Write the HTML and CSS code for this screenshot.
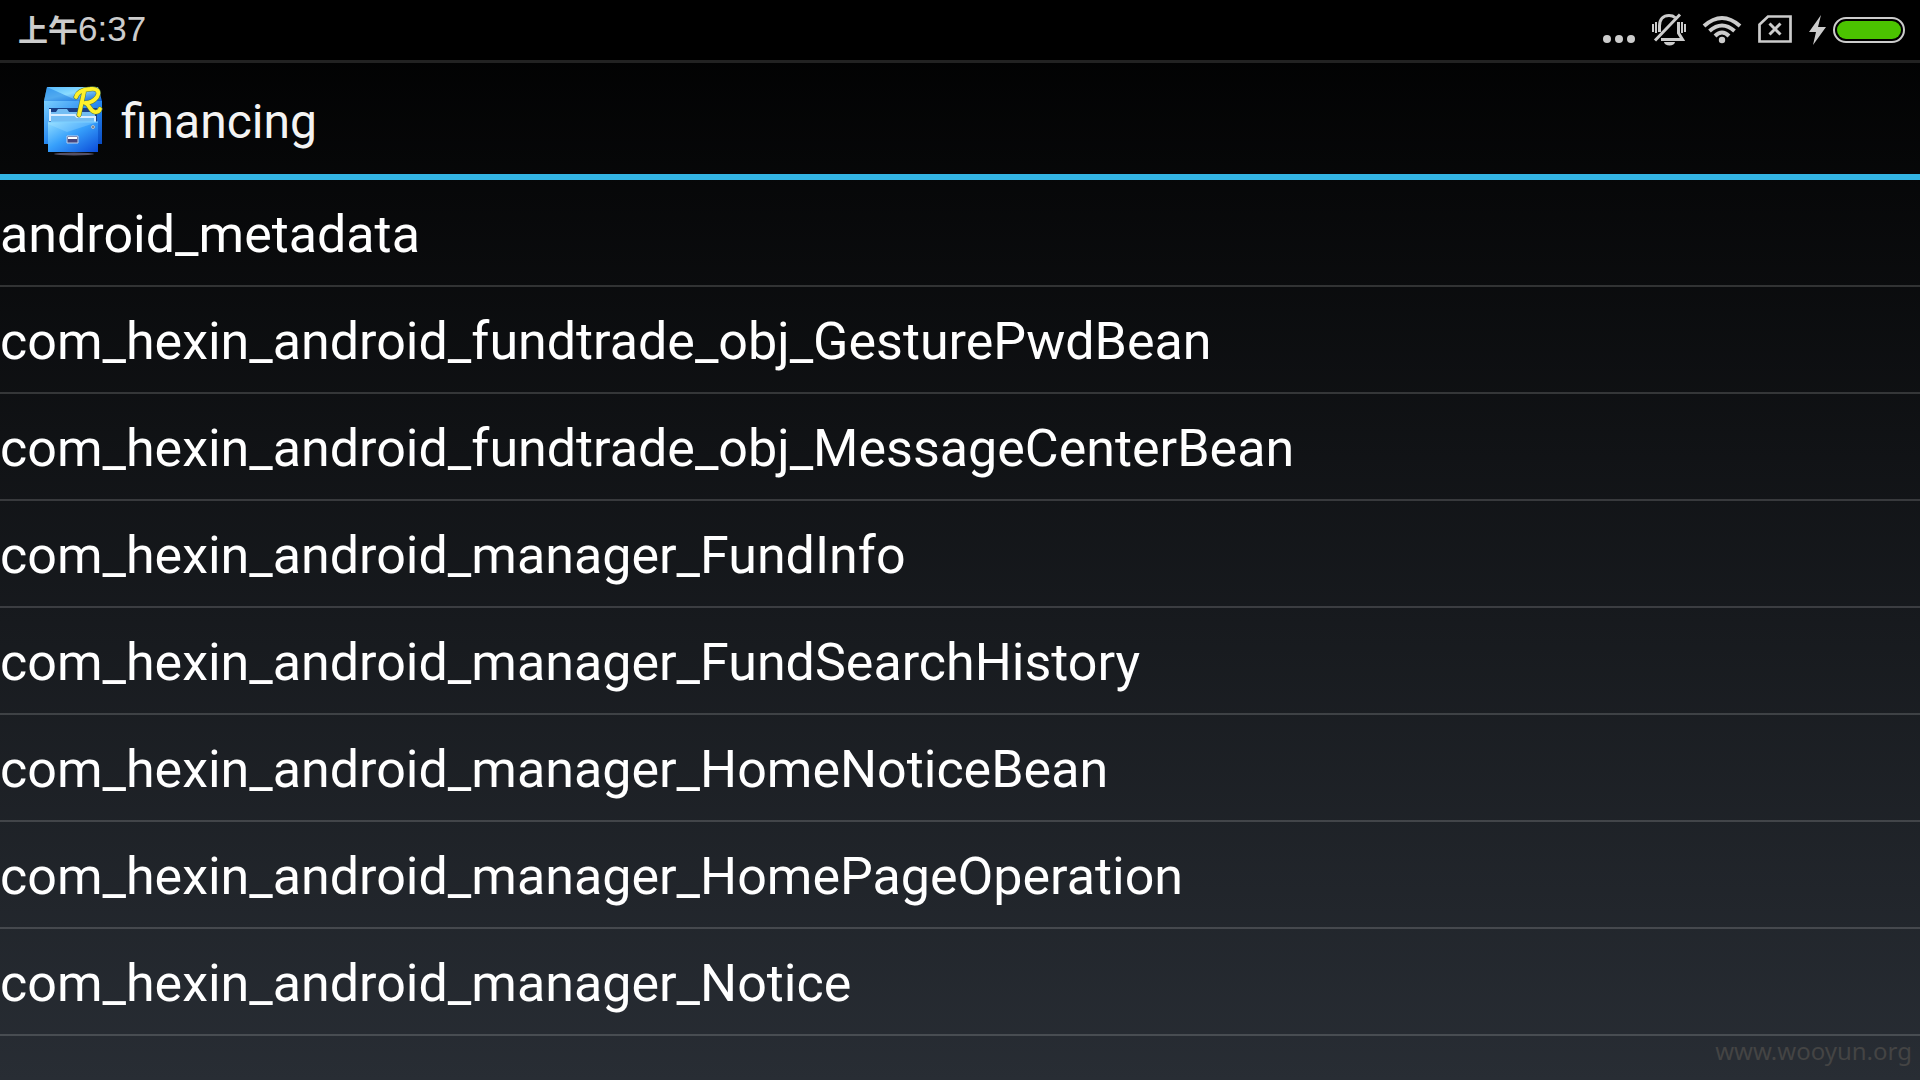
FILE: index.html
```html
<!DOCTYPE html>
<html lang="zh-CN">
<head>
<meta charset="utf-8">
<meta name="viewport" content="width=device-width, initial-scale=1">
<title>financing</title>
<link rel="stylesheet" href="styles.css">
</head>
<body>
<div class="status-bar">
  <time class="clock"><span class="period">上午</span>6:37</time>
  <svg class="status-icons" viewBox="0 0 320 60" role="img" aria-label="Muted, Wi-Fi, no SIM, charging">
    <g fill="#ccc">
      <circle cx="17" cy="39" r="4"/><circle cx="29" cy="39" r="4"/><circle cx="41" cy="39" r="4"/>
      <circle cx="132" cy="40" r="3.200"/>
      <path d="M74 42h11a5.500 3.500 0 0 1-11 0z"/>
      <path d="M231 15 219 32h7l-3 13 13-18h-8z"/>
    </g>
    <g fill="none" stroke="#ccc" stroke-width="3">
      <path d="M69.500 32V26c0-7 4-10.500 9.500-10.500q4 0 6 2M88.500 22v11l4 6.500H71M65 40.500 90 14.500"/>
      <path stroke-width="2" d="M66 22v11M63 24v8M92 22v11M95 24v8"/>
      <path stroke-width="4" d="M114 26Q132 10 150 26M119.500 31Q132 20 144.500 31M125 36Q132 29 139 36"/>
      <path stroke-width="2.700" d="M178 16.500h22.500v25h-31V24.500z"/>
      <path d="M179.500 23.500l11 11M190.500 23.500l-11 11"/>
    </g>
    <rect x="244" y="18" width="70" height="24" rx="12" fill="none" stroke="#ccc" stroke-width="2"/>
    <rect x="247" y="21" width="64" height="18" rx="9" fill="#4bc400"/>
  </svg>
</div>
<header class="action-bar">
  <svg class="app-icon" viewBox="0 0 60 72" aria-hidden="true">
    <defs>
      <linearGradient id="top" x1="0" y1="0" x2="1" y2="1"><stop offset="0" stop-color="#55baff"/><stop offset=".45" stop-color="#8bdcff"/><stop offset="1" stop-color="#0759d8"/></linearGradient>
      <linearGradient id="side" x1="0" y1="0" x2="1" y2="1"><stop offset="0" stop-color="#7bcfff"/><stop offset=".5" stop-color="#2789f0"/><stop offset="1" stop-color="#0a4cc4"/></linearGradient>
      <linearGradient id="front" x1="0" y1="0" x2="1" y2="1"><stop offset="0" stop-color="#8fdcff"/><stop offset=".45" stop-color="#37a0fb"/><stop offset="1" stop-color="#0b4bd8"/></linearGradient>
    </defs>
    <ellipse cx="31" cy="68" rx="20" ry="1.500" fill="#555166"/>
    <path d="M4 1h51l4 14H1z" fill="url(#top)"/>
    <path d="M4 1 35 15H1z" fill="#1677df" opacity=".5"/>
    <path d="M1 15h58v43H1z" fill="url(#side)"/>
    <path d="M6 22h48v14H6z" fill="#183f87"/>
    <path d="M8 26h5l2-3h9l2 3h26v10H8z" fill="#73bdf3"/>
    <path d="M7 23v12M8 29h24l2 2h18v5" fill="none" stroke="#d8edff" stroke-width="2"/>
    <path d="M5 36h50v30H5z" fill="url(#front)"/>
    <path d="M5 36h50L24 46 5 38z" fill="#b8edff" opacity=".25"/>
    <path d="M5 36h50" stroke="#7ccfff"/>
    <path d="M24 50h11v7H24z" fill="#45457d" stroke="#bed1ec"/>
    <path d="M25 51h9v2h-9z" fill="#fff"/>
    <circle cx="50" cy="41" r="1.500" fill="#667384" stroke="#bac4cc"/>
    <g fill="none" stroke-linecap="round" stroke-linejoin="round">
      <path d="M33 11Q35 4 47 3c8-1 10 3 7 8-3 4-7 6-12 6 5 1 5 10 11 9q3 0 4-3M41 6 36 29" stroke="#577a43" stroke-width="5"/>
      <path d="M33 11Q35 4 47 3c8-1 10 3 7 8-3 4-7 6-12 6 5 1 5 10 11 9q3 0 4-3M41 6 36 29" stroke="#fff12b" stroke-width="3.800"/>
    </g>
  </svg>
  <h1 class="title">financing</h1>
</header>
<main>
  <ul class="tables">
    <li>android_metadata</li>
    <li>com_hexin_android_fundtrade_obj_GesturePwdBean</li>
    <li>com_hexin_android_fundtrade_obj_MessageCenterBean</li>
    <li>com_hexin_android_manager_FundInfo</li>
    <li>com_hexin_android_manager_FundSearchHistory</li>
    <li>com_hexin_android_manager_HomeNoticeBean</li>
    <li>com_hexin_android_manager_HomePageOperation</li>
    <li>com_hexin_android_manager_Notice</li>
  </ul>
</main>
<footer class="watermark">www.wooyun.org</footer>
</body>
</html>
```
FILE: styles.css
```css
* { box-sizing: border-box; }

body {
  margin: 0;
  min-height: 100vh;
  display: flex;
  flex-direction: column;
  background: linear-gradient(#000, #282d34);
  color: #fff;
  font-family: Roboto, "Noto Sans CJK SC", sans-serif;
}

.status-bar {
  display: flex;
  align-items: center;
  justify-content: space-between;
  height: 63px;
  padding: 0 10px 0 18px;
  border-bottom: 3px solid #222;
  background: #000;
}

.clock {
  padding-bottom: 4px;
  color: #ccc;
  font-family: "Liberation Sans", "Noto Sans CJK SC", sans-serif;
  font-size: 35px;
  line-height: 56px;
}

.period {
  font-family: "Noto Sans CJK SC", sans-serif;
  font-size: 30px;
  font-weight: 700;
}

.status-icons {
  width: 320px;
  height: 60px;
}

.action-bar {
  display: flex;
  align-items: center;
  gap: 18px;
  height: 117px;
  padding: 6px 43px 0;
  border-bottom: 6px solid #33b5e5;
}

.app-icon {
  width: 60px;
  height: 72px;
}

.title {
  margin: 0;
  color: #f3f3f3;
  font-size: 48px;
  font-weight: 400;
  line-height: 56px;
}

.tables {
  margin: 0;
  padding: 0;
  list-style: none;
}

.tables li {
  padding: 23px 0 18px;
  border-bottom: 2px solid rgba(255, 255, 255, 0.16);
  font-size: 52px;
  line-height: 64px;
}

.watermark {
  margin-top: auto;
  padding: 0 8px 14px;
  color: #444;
  font-family: "Noto Sans", sans-serif;
  font-size: 24px;
  line-height: 30px;
  text-align: right;
}
```
